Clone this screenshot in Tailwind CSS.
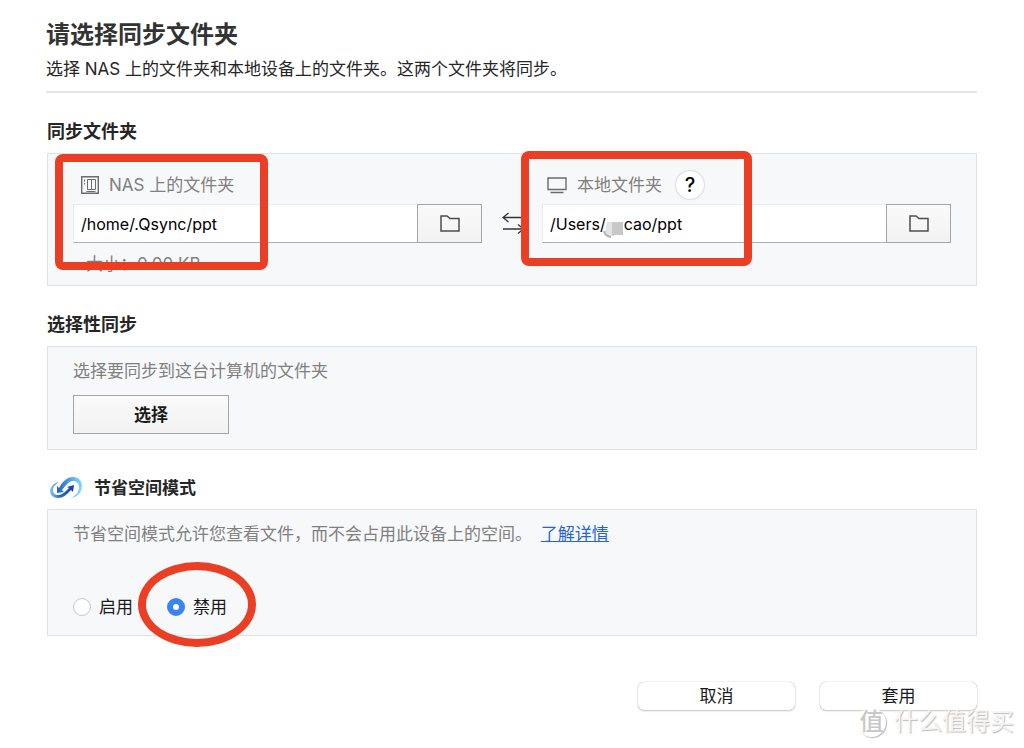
<!DOCTYPE html>
<html lang="zh-CN">
<head>
<meta charset="utf-8">
<meta name="viewport" content="width=device-width, initial-scale=1">
<title>请选择同步文件夹</title>
<script src="https://cdn.jsdelivr.net/npm/@tailwindcss/browser@4"></script>
</head>
<body class="relative min-h-screen overflow-x-hidden bg-white font-['Inter','Noto_Sans_CJK_SC',sans-serif] text-[17px] leading-6 text-[#262626]">
<main class="px-[47px] pt-[21px]">
  <header class="-ml-px border-b-2 border-[#e5e5e5] pb-[10px]">
    <h1 class="text-2xl leading-7 font-bold text-[#333]">请选择同步文件夹</h1>
    <p class="mt-2 leading-6">选择 NAS 上的文件夹和本地设备上的文件夹。这两个文件夹将同步。</p>
  </header>

  <section>
    <h2 class="mt-[25px] text-lg leading-7 font-bold text-[#262626]">同步文件夹</h2>
    <div class="relative mt-[7px] flex h-[133px] border border-[#e0e1e3] bg-[#f7f8fa] px-[25px] pt-[17px]">
      <div class="flex-1">
        <label for="nas" class="flex h-7 items-center gap-[10px] pl-2 text-[#808080]">
          <svg class="size-[18px]" viewBox="0 0 18 18" fill="none" stroke="#6c6c6c"><path stroke-width="1.4" d="M.7.7h16.6v16.6H.7z"/><path d="M6.500 3.500h8v10h-8zM10.500 3.500v10M3.500 3.500v2M3.500 7v1.500M5.500 15.500h9"/></svg>
          NAS 上的文件夹
        </label>
        <div class="mt-[5px] flex">
          <input id="nas" type="text" value="/home/.Qsync/ppt" class="h-[39px] min-w-0 flex-1 border border-r-0 border-[#ebebeb] border-b-[#b0b0b0] bg-white px-[7px] text-base text-black outline-none">
          <button type="button" aria-label="浏览 NAS" class="flex h-[39px] w-[65px] items-center justify-center border border-[#a5a5a5] bg-linear-to-b from-[#fafafa] to-[#f2f2f2]">
            <svg class="h-[17px] w-5" viewBox="0 0 20 17" fill="none" stroke="#4d4d4d" stroke-width="1.500"><path d="M1 1h6l3 2.500h9V16H1z"/></svg>
          </button>
        </div>
        <p class="pl-[13px] pt-[9px] text-[17px] leading-6 text-[#808080]">大小：0.00 KB</p>
      </div>
      <div class="flex w-[60px] shrink-0 pl-5 pt-[41px]">
        <svg class="h-[22px] w-6" viewBox="0 0 24 22" fill="none" stroke="#333" stroke-width="1.300"><path d="M24 5.500H1M6.500 1 1 5.500 6.500 10M1 17h21M16 12.500l5.500 4.500-5.500 4.500"/></svg>
      </div>
      <div class="flex-1">
        <div class="flex h-7 items-center pl-[5px] text-[#808080]">
          <label for="local" class="flex items-center gap-[10px]">
            <svg class="h-[17px] w-5" viewBox="0 0 20 17" fill="none" stroke="#6c6c6c" stroke-width="1.400"><path d="M1 1h18v11.500H1zM3.500 15.500h13"/></svg>
            本地文件夹
          </label>
          <button type="button" aria-label="帮助" class="ml-[14px] size-7 rounded-full bg-white text-xl leading-7 font-medium text-black shadow-[0_0_2px_#0005]">?</button>
        </div>
        <div class="relative mt-[5px] flex">
          <input id="local" type="text" value="/Users/    cao/ppt" class="h-[39px] min-w-0 flex-1 border border-r-0 border-[#ebebeb] border-b-[#b0b0b0] bg-white px-[7px] text-base text-black outline-none">
          <svg class="absolute left-[60px] top-[17px] h-[18px] w-[22px]" viewBox="0 0 22 18"><path fill="#e4e4e4" d="M5 1h7v14H5L3 11z"/><path fill="#c8c8c8" d="M10 1h11v13H10z"/><path fill="none" stroke="#b5b5b5" stroke-width="2" d="M2 10q1 5 7 6"/></svg>
          <button type="button" aria-label="浏览本地" class="flex h-[39px] w-[65px] items-center justify-center border border-[#a5a5a5] bg-linear-to-b from-[#fafafa] to-[#f2f2f2]">
            <svg class="h-[17px] w-5" viewBox="0 0 20 17" fill="none" stroke="#4d4d4d" stroke-width="1.500"><path d="M1 1h6l3 2.500h9V16H1z"/></svg>
          </button>
        </div>
      </div>
      <div class="pointer-events-none absolute left-[7px] top-0 h-[116px] w-[213px] rounded-lg border-8 border-[#ea3f24]"></div>
      <div class="pointer-events-none absolute left-[473px] top-[-3px] h-[115px] w-[231px] rounded-lg border-8 border-[#ea3f24]"></div>
    </div>
  </section>

  <section>
    <h2 class="mt-[25px] text-lg leading-7 font-bold text-[#262626]">选择性同步</h2>
    <div class="mt-[7px] h-[104px] border border-[#e0e1e3] bg-[#f7f8fa] px-[25px] pt-3">
      <p class="text-[#808080]">选择要同步到这台计算机的文件夹</p>
      <button type="button" class="mt-3 h-[39px] w-[156px] border border-[#a5a5a5] bg-linear-to-b from-[#fafafa] to-[#f2f2f2] font-bold text-[#1a1a1a]">选择</button>
    </div>
  </section>

  <section>
    <h2 class="mt-6 flex h-7 items-center gap-3 pl-[3px] font-bold text-[#262626]">
      <svg class="h-[22px] w-8" viewBox="0 0 32 22"><defs><linearGradient id="a" x1="0" y1="0" x2="1" y2="0"><stop stop-color="#1f5fb8"/><stop offset=".5" stop-color="#4fa3e3"/><stop offset="1" stop-color="#8adcfb"/></linearGradient><linearGradient id="b" x1="0" y1="0" x2="1" y2="0"><stop stop-color="#8cc6ee"/><stop offset=".4" stop-color="#2f6fc0"/><stop offset="1" stop-color="#163f90"/></linearGradient></defs><path fill="url(#a)" d="M9 11C13 4 17 0 23 0c6 0 9 4 9 9 0 7-5 11-12 12 6-2 9-6 9-11 0-4-3-6-6-6-4 0-7 4-11 9l2 2-7 1V9z"/><path fill="url(#b)" d="M9 5C4 6 0 10 0 14c0 4 3 7 8 7 6 0 9-4 13-8l2 2 1-7-7 2 2 1c-4 4-7 7-11 7-3 0-5-2-5-5s2-6 6-8z"/></svg>
      节省空间模式
    </h2>
    <div class="relative mt-[7px] h-[127px] border border-[#e0e1e3] bg-[#f7f8fa] px-[25px] pt-3">
      <p class="text-[#808080]">节省空间模式允许您查看文件，而不会占用此设备上的空间。 <a href="#" class="ml-1 text-[#2563d9] underline">了解详情</a></p>
      <div class="mt-[49px] flex h-6 items-center gap-[34px] text-[#1a1a1a]">
        <label class="flex items-center gap-2"><input type="radio" name="mode" class="size-[18px] appearance-none rounded-full border border-[#c9c9c9] bg-white checked:border-[6px] checked:border-[#3b82f7]">启用</label>
        <label class="flex items-center gap-2"><input type="radio" name="mode" checked class="size-[18px] appearance-none rounded-full border border-[#c9c9c9] bg-white checked:border-[6px] checked:border-[#3b82f7]">禁用</label>
      </div>
      <div class="pointer-events-none absolute left-[90px] top-[52px] h-[85px] w-[118px] rounded-[50%] border-8 border-[#ea3f24]"></div>
    </div>
  </section>

  <footer class="mt-[46px] flex justify-end gap-[25px]">
    <button type="button" class="h-7 w-[157px] rounded-md bg-white leading-6 text-[#1a1a1a] shadow-[0_0_1px_#0006,0_1px_2px_#0003]">取消</button>
    <button type="button" class="h-7 w-[157px] rounded-md bg-white leading-6 text-[#1a1a1a] shadow-[0_0_1px_#0006,0_1px_2px_#0003]">套用</button>
  </footer>
</main>
<div class="pointer-events-none absolute right-[10px] top-[706px] flex items-center gap-2 text-2xl leading-8 text-[#f4f4f4] [text-shadow:1px_1px_1px_#bbb]">
  <span class="flex size-[29px] items-center justify-center rounded-full bg-white text-2xl font-medium text-[#c8c8c8] shadow-[1px_1px_1px_#bbb] [text-shadow:none]">值</span><span>什么值得买</span>
</div>
</body>
</html>
